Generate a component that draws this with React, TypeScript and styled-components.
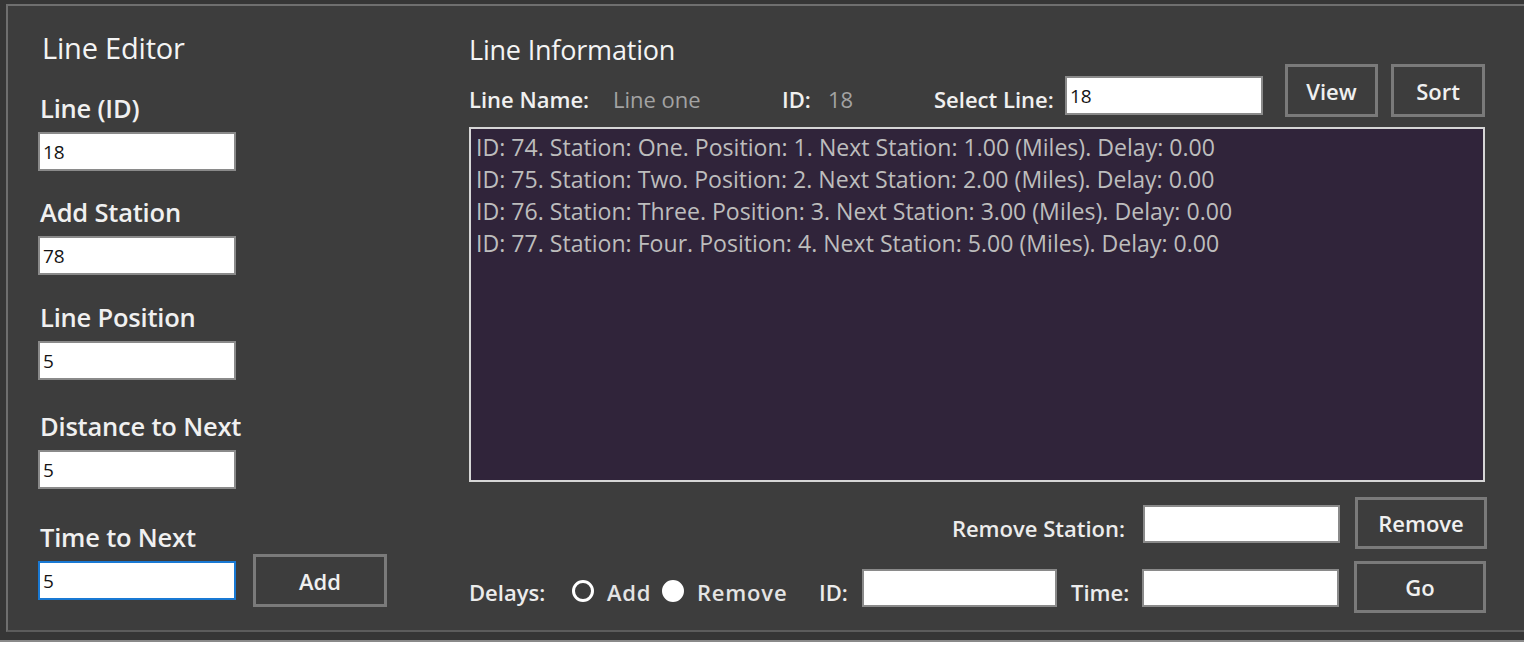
import React from "react";
import styled, { createGlobalStyle } from "styled-components";

const GlobalStyle = createGlobalStyle`
  html, body {
    margin: 0;
    padding: 0;
    background: #ffffff;
  }
  body {
    font-family: "Open Sans", "Liberation Sans", sans-serif;
  }
  * {
    box-sizing: border-box;
  }
`;

const Window = styled.div`
  width: 1524px;
  height: 642px;
  background: #363636;
  padding: 4px 0 8px 6px;
  border-bottom: 2px solid #8a8a8a;
`;

const Frame = styled.div`
  height: 100%;
  display: flex;
  background: #3d3d3d;
  border-top: 2px solid #6f6f6f;
  border-left: 2px solid #6f6f6f;
  border-bottom: 2px solid #5c5c5c;
`;

const EditorColumn = styled.div`
  width: 461px;
  padding-left: 30px;
  display: flex;
  flex-direction: column;
`;

const InfoColumn = styled.div`
  width: 1018px;
  display: flex;
  flex-direction: column;
`;

const Title = styled.h1<{ $top: number; $size: number; $indent?: number }>`
  margin: ${(p) => p.$top}px 0 0 ${(p) => p.$indent ?? 0}px;
  font-size: ${(p) => p.$size}px;
  font-weight: 400;
  line-height: 28px;
  height: 28px;
  color: #f4f4f4;
  letter-spacing: -0.2px;
  white-space: nowrap;
`;

const Field = styled.div<{ $top: number }>`
  margin-top: ${(p) => p.$top}px;
  display: flex;
  flex-direction: column;
`;

const FieldLabel = styled.label<{ $gap?: number }>`
  margin: 0 0 ${(p) => p.$gap ?? 9}px 2px;
  font-size: 25.5px;
  font-weight: 600;
  line-height: 30px;
  height: 30px;
  color: #f0f0f0;
  letter-spacing: -0.2px;
  white-space: nowrap;
`;

const TextBox = styled.input<{ $width: number; $active?: boolean }>`
  width: ${(p) => p.$width}px;
  height: 39px;
  padding: 0 3px;
  border: 2px solid ${(p) => (p.$active ? "#1979d3" : "#8a8a8a")};
  background: #ffffff;
  color: #141414;
  font-family: "Open Sans", "Liberation Sans", sans-serif;
  font-size: 19px;
  outline: none;
`;

const ButtonRow = styled.div`
  display: flex;
  align-items: center;
  gap: 17px;
`;

const ActionButton = styled.button<{ $width: number }>`
  width: ${(p) => p.$width}px;
  height: 53px;
  border: 3px solid #7a7a7a;
  background: #3d3d3d;
  color: #f0f0f0;
  font-family: "Open Sans", "Liberation Sans", sans-serif;
  font-size: 22px;
  font-weight: 600;
  padding: 0;
`;

const InfoRow = styled.div`
  height: 53px;
  display: flex;
  align-items: flex-end;
`;

const Caption = styled.span<{ $width: number; $muted?: boolean; $bold?: boolean }>`
  width: ${(p) => p.$width}px;
  flex: none;
  margin-bottom: 3px;
  font-size: 22px;
  font-weight: ${(p) => (p.$bold ? 600 : 400)};
  line-height: 30px;
  color: ${(p) => (p.$muted ? "#a3a3a3" : "#f0f0f0")};
  white-space: nowrap;
`;

const InfoBox = styled(TextBox)`
  margin-bottom: 2px;
`;

const InfoButtons = styled.div`
  margin-left: 22px;
  display: flex;
  gap: 13px;
`;

const StationList = styled.ul`
  margin: 10px 2px 0 0;
  height: 355px;
  padding: 2px 5px;
  list-style: none;
  background: #30243a;
  border: 2px solid #d6d6d6;
`;

const StationItem = styled.li`
  font-size: 23.1px;
  line-height: 32px;
  color: #bdbdbd;
  white-space: nowrap;
`;

const ControlRow = styled.div<{ $top: number }>`
  margin-top: ${(p) => p.$top}px;
  height: 52px;
  display: flex;
  align-items: center;
`;

const RowLabel = styled.span<{ $width?: number; $right?: boolean; $light?: boolean }>`
  width: ${(p) => (p.$width ? `${p.$width}px` : "auto")};
  flex: ${(p) => (p.$width ? "none" : "1")};
  text-align: ${(p) => (p.$right ? "right" : "left")};
  padding-right: ${(p) => (p.$right ? 18 : 0)}px;
  padding-top: 10px;
  font-size: 22px;
  font-weight: 600;
  line-height: 30px;
  color: ${(p) => (p.$light ? "#e4e4e4" : "#ececec")};
  letter-spacing: ${(p) => (p.$light ? 0.8 : 0)}px;
  white-space: nowrap;
`;

const Radio = styled.span<{ $checked?: boolean }>`
  width: 22px;
  height: 22px;
  flex: none;
  margin: 8px 13px 0 0;
  border-radius: 50%;
  border: 3px solid #ffffff;
  background: ${(p) => (p.$checked ? "#ffffff" : "transparent")};
`;

const BottomBox = styled(TextBox)`
  height: 38px;
  margin: 2px 15px 0 0;
  flex: none;
`;

const RowButton = styled(ActionButton)`
  height: 52px;
  flex: none;
`;

const stations = [
  "ID: 74. Station: One. Position: 1. Next Station: 1.00 (Miles). Delay: 0.00",
  "ID: 75. Station: Two. Position: 2. Next Station: 2.00 (Miles). Delay: 0.00",
  "ID: 76. Station: Three. Position: 3. Next Station: 3.00 (Miles). Delay: 0.00",
  "ID: 77. Station: Four. Position: 4. Next Station: 5.00 (Miles). Delay: 0.00",
];

export default function App() {
  return (
    <>
      <GlobalStyle />
      <Window>
        <Frame>
          <EditorColumn>
            <Title $top={28} $size={29} $indent={4}>Line Editor</Title>
            <Field $top={31}>
              <FieldLabel>Line (ID)</FieldLabel>
              <TextBox $width={198} defaultValue="18" />
            </Field>
            <Field $top={26}>
              <FieldLabel>Add Station</FieldLabel>
              <TextBox $width={198} defaultValue="78" />
            </Field>
            <Field $top={27}>
              <FieldLabel>Line Position</FieldLabel>
              <TextBox $width={198} defaultValue="5" />
            </Field>
            <Field $top={31}>
              <FieldLabel>Distance to Next</FieldLabel>
              <TextBox $width={198} defaultValue="5" />
            </Field>
            <Field $top={33}>
              <FieldLabel $gap={2}>Time to Next</FieldLabel>
              <ButtonRow>
                <TextBox $width={198} $active defaultValue="5" />
                <ActionButton $width={134}>Add</ActionButton>
              </ButtonRow>
            </Field>
          </EditorColumn>

          <InfoColumn>
            <Title $top={30} $size={27}>Line Information</Title>
            <InfoRow>
              <Caption $width={144} $bold>Line Name:</Caption>
              <Caption $width={169} $muted>Line one</Caption>
              <Caption $width={46} $bold>ID:</Caption>
              <Caption $width={106} $muted>18</Caption>
              <Caption $width={131} $bold>Select Line:</Caption>
              <InfoBox $width={198} defaultValue="18" />
              <InfoButtons>
                <ActionButton $width={93}>View</ActionButton>
                <ActionButton $width={94}>Sort</ActionButton>
              </InfoButtons>
            </InfoRow>
            <StationList>
              {stations.map((s) => (
                <StationItem key={s}>{s}</StationItem>
              ))}
            </StationList>
            <ControlRow $top={15}>
              <RowLabel $right>Remove Station:</RowLabel>
              <BottomBox $width={197} />
              <RowButton $width={132}>Remove</RowButton>
            </ControlRow>
            <ControlRow $top={12}>
              <RowLabel $width={103}>Delays:</RowLabel>
              <Radio />
              <RowLabel $width={55} $light>Add</RowLabel>
              <Radio $checked />
              <RowLabel $width={122} $light>Remove</RowLabel>
              <RowLabel $width={43}>ID:</RowLabel>
              <BottomBox $width={195} style={{ marginRight: 14 }} />
              <RowLabel $width={71}>Time:</RowLabel>
              <BottomBox $width={197} />
              <RowButton $width={132}>Go</RowButton>
            </ControlRow>
          </InfoColumn>
        </Frame>
      </Window>
    </>
  );
}
